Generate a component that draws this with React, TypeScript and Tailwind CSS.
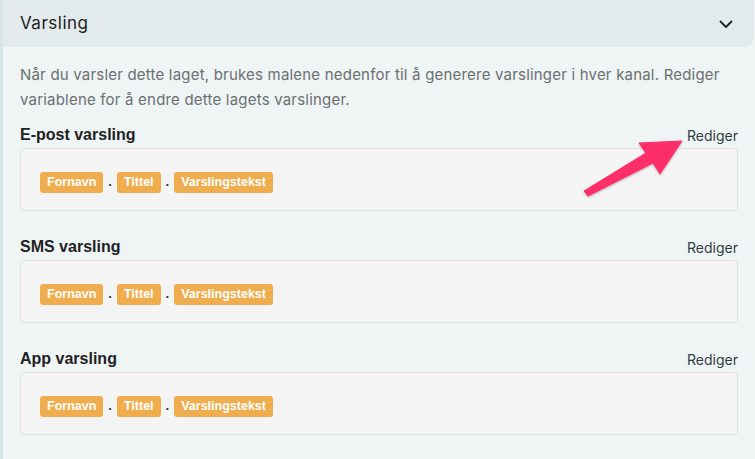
import React from "react";

const Tag = ({ children }: { children: React.ReactNode }) => (
  <span className="inline-flex h-[21px] items-center rounded-[3px] bg-[#f0ad4e] px-[7px] text-[12.5px] font-bold text-white [font-family:'Liberation_Sans',Arial,sans-serif]">
    {children}
  </span>
);

const Dot = () => (
  <span className="mx-[5px] text-[13px] font-bold text-[#333] [font-family:'Liberation_Sans',Arial,sans-serif]">.</span>
);

const Section = ({ title }: { title: string }) => (
  <div className="flex flex-col">
    <div className="flex items-end justify-between h-[24px]">
      <span className="text-[16px] font-bold text-[#222] [font-family:'Liberation_Sans',Arial,sans-serif] leading-[20px]">
        {title}
      </span>
      <span className="text-[14px] text-[#2f3d3d] leading-[18px]">Rediger</span>
    </div>
    <div className="mt-[3px] flex h-[63px] items-start rounded-[4px] border border-[#e2e2e2] bg-[#f4f4f4] pl-[19px] pt-[23px]">
      <Tag>Fornavn</Tag>
      <Dot />
      <Tag>Tittel</Tag>
      <Dot />
      <Tag>Varslingstekst</Tag>
    </div>
  </div>
);

export default function App() {
  return (
    <div className="relative min-h-[459px] w-[755px] overflow-hidden border-l-[3px] border-[#d8e3e5] bg-[#eff5f5] [font-family:Inter,'Noto_Sans',sans-serif]">
      <div className="mr-[1px] flex h-[47px] items-center justify-between rounded-br-[10px] bg-[#e2eaeb] pl-[17px] pr-[20px]">
        <span className="text-[17px] text-[#222] tracking-[0.5px]">Varsling</span>
        <svg width="16" height="16" viewBox="0 0 16 16" fill="none">
          <path d="M2.5 5.5 L8 11 L13.5 5.5" stroke="#222" strokeWidth="1.8" strokeLinecap="round" strokeLinejoin="round" />
        </svg>
      </div>
      <div className="px-[17px] pt-[15px]">
        <p className="text-[15px] leading-[25px] tracking-[0.2px] text-[#6b6f70]">
          Når du varsler dette laget, brukes malene nedenfor til å generere varslinger i hver kanal. Rediger variablene for å endre dette lagets varslinger.
        </p>
        <div className="mt-[9px] flex flex-col gap-[22px]">
          <Section title="E-post varsling" />
          <Section title="SMS varsling" />
          <Section title="App varsling" />
        </div>
      </div>
      <svg className="pointer-events-none absolute left-0 top-0" width="755" height="459" viewBox="0 0 755 459">
        <defs>
          <filter id="sh" x="-20%" y="-20%" width="140%" height="140%">
            <feDropShadow dx="0" dy="1" stdDeviation="1.2" floodColor="#000" floodOpacity="0.3" />
          </filter>
        </defs>
        <path
          d="M581 191 L643 153 L636 143 L679 141 L657 174 L650 163 L585 196 Z"
          fill="#fe2d69"
          stroke="#fe2d69"
          strokeWidth="1"
          strokeLinejoin="round"
          filter="url(#sh)"
        />
      </svg>
    </div>
  );
}
